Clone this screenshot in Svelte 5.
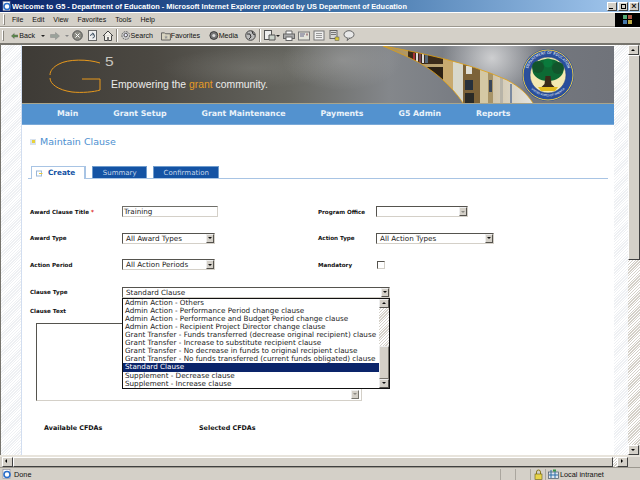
<script lang="ts">
  const menus = ["File", "Edit", "View", "Favorites", "Tools", "Help"];
  const navItems = ["Main", "Grant Setup", "Grant Maintenance", "Payments", "G5 Admin", "Reports"];
  const clauseOptions = [
    "Admin Action - Others",
    "Admin Action - Performance Period change clause",
    "Admin Action - Performance and Budget Period change clause",
    "Admin Action - Recipient Project Director change clause",
    "Grant Transfer - Funds transferred (decrease original recipient) clause",
    "Grant Transfer - Increase to substitute recipient clause",
    "Grant Transfer - No decrease in funds to original recipient clause",
    "Grant Transfer - No funds transferred (current funds obligated) clause",
    "Standard Clause",
    "Supplement - Decrease clause",
    "Supplement - Increase clause",
  ];
  let selected = "Standard Clause";
</script>

<div class="window">
  <div class="titlebar">
    <svg class="ie" width="10" height="10" viewBox="0 0 10 10">
      <rect x="1" y="0.5" width="7" height="9" fill="#fff" stroke="#889" stroke-width="0.6" />
      <circle cx="5" cy="5.5" r="3" fill="none" stroke="#2a6fc9" stroke-width="1.6" />
    </svg>
    <span class="title">Welcome to G5 - Department of Education - Microsoft Internet Explorer provided by US Department of Education</span>
    <div class="winbtns">
      <span class="winbtn"><i class="min"></i></span>
      <span class="winbtn"><i class="max"></i></span>
      <span class="winbtn close">×</span>
    </div>
  </div>

  <div class="menubar">
    <span class="grip"></span>
    {#each menus as m}<span class="menu">{m}</span>{/each}
    <span class="throbber">
      <svg width="11" height="11" viewBox="0 0 11 11">
        <rect x="1" y="1" width="4" height="4" fill="#5a7" />
        <rect x="6" y="1" width="4" height="4" fill="#a54" />
        <rect x="1" y="6" width="4" height="4" fill="#47a" />
        <rect x="6" y="6" width="4" height="4" fill="#ba4" />
      </svg>
    </span>
  </div>

  <div class="toolbar">
    <span class="grip"></span>
    <span class="tool back">
      <svg width="10" height="10" viewBox="0 0 10 10"><path d="M0.5 5 L4.5 1.5 V3.5 H9.5 V6.5 H4.5 V8.5Z" fill="#5b8a4a" stroke="#555" stroke-width="0.5" /></svg>
      Back<b class="drop"></b>
    </span>
    <span class="tool fwd">
      <svg width="10" height="10" viewBox="0 0 10 10"><path d="M9.5 5 L5.5 1.5 V3.5 H0.5 V6.5 H5.5 V8.5Z" fill="#9aa29a" stroke="#888" stroke-width="0.5" /></svg>
      <b class="drop light"></b>
    </span>
    <svg class="ico wide" width="11" height="11" viewBox="0 0 11 11"><circle cx="5.5" cy="5.5" r="4.8" fill="#8c8c84" stroke="#555" /><path d="M3.5 3.5l4 4m0-4l-4 4" stroke="#fff" /></svg>
    <svg class="ico wide" width="11" height="11" viewBox="0 0 11 11"><rect x="1.5" y="0.5" width="8" height="10" fill="#eee" stroke="#666" /><path d="M3.5 6a2 2 0 1 1 2 2M5 3l2 1-1 1.5" fill="none" stroke="#456" /></svg>
    <svg class="ico tight" width="12" height="11" viewBox="0 0 12 11"><path d="M1 6 L6 1 L11 6 M2.5 5.5V10.5H9.5V5.5" fill="#f2f0ea" stroke="#444" /><rect x="5" y="7" width="2" height="3.5" fill="#777" /></svg>
    <span class="sep"></span>
    <span class="tool search">
      <svg width="11" height="11" viewBox="0 0 11 11"><circle cx="5.5" cy="5.5" r="4.5" fill="#ccc" stroke="#555" stroke-dasharray="2 1" /><circle cx="5.5" cy="5" r="2" fill="#eef" stroke="#444" /></svg>
      Search
    </span>
    <span class="tool favs">
      <svg width="11" height="10" viewBox="0 0 11 10"><path d="M0.5 1.5H4L5 2.5H10.5V9.5H0.5Z" fill="#d8d4c0" stroke="#555" /><path d="M5.5 4l.8 1.5 1.5.2-1 1 .3 1.5-1.4-.8-1.4.8.3-1.5-1-1 1.5-.2Z" fill="#999" /></svg>
      Favorites
    </span>
    <span class="tool media">
      <svg width="11" height="11" viewBox="0 0 11 11"><circle cx="5.5" cy="5.5" r="4.5" fill="#777" stroke="#333" /><circle cx="5.5" cy="5.5" r="1.8" fill="#ddd" /></svg>
      Media
    </span>
    <svg class="ico" width="11" height="11" viewBox="0 0 11 11"><circle cx="5.5" cy="5.5" r="4.8" fill="#bbb" stroke="#444" /><path d="M2 4h3l1 3-2 2M7 1l1 3 2 1" fill="none" stroke="#333" /></svg>
    <span class="sep"></span>
    <svg width="12" height="11" viewBox="0 0 12 11"><rect x="0.5" y="0.5" width="7" height="9" fill="#eee" stroke="#555" /><path d="M5 5h6v5H5Z" fill="#cbd3cb" stroke="#555" /></svg><b class="drop edit"></b>
    <svg class="ico" width="12" height="11" viewBox="0 0 12 11"><path d="M3 4V1h6v3" fill="#fff" stroke="#666" /><rect x="0.5" y="4" width="11" height="4.5" fill="#aaa" stroke="#666" /><rect x="3" y="7" width="6" height="3.5" fill="#fff" stroke="#666" /></svg>
    <svg class="ico" width="12" height="11" viewBox="0 0 12 11"><rect x="0.5" y="2" width="11" height="8" fill="#e4e4da" stroke="#777" /><path d="M2 4h5M2 6h4" stroke="#668" /><rect x="8" y="3.5" width="2" height="2" fill="#a88" /></svg>
    <svg class="ico" width="12" height="11" viewBox="0 0 12 11"><rect x="1" y="1" width="10" height="9" fill="#eee" stroke="#777" /><path d="M3 3.5h6M3 5.5h6M3 7.5h6" stroke="#999" /></svg>
    <svg class="ico" width="12" height="11" viewBox="0 0 12 11"><rect x="2" y="0.5" width="7" height="8" fill="#d8d8d8" stroke="#666" /><path d="M3 2.5h5M3 4.5h5" stroke="#777" /><rect x="7" y="7" width="4" height="3.5" fill="#d8c83a" stroke="#555" stroke-width="0.5" /></svg>
    <svg class="ico" width="12" height="11" viewBox="0 0 12 11"><ellipse cx="6" cy="4.5" rx="5" ry="3.8" fill="#e8e8e8" stroke="#666" /><path d="M5 8l-1 2.5 3-2.5" fill="#e8e8e8" stroke="#666" /></svg>
  </div>

  <div class="viewport">
    <div class="page">
      <div class="hatch left"></div>
      <main class="content">
        <div class="banner">
          <div class="banner-photo"></div>
          <svg class="banner-art" width="592" height="57" viewBox="0 0 592 57">
            <defs>
              <linearGradient id="shelf" x1="0" x2="1" y1="0" y2="0">
                <stop offset="0" stop-color="#a88f5c" />
                <stop offset="0.5" stop-color="#c2ab7c" />
                <stop offset="1" stop-color="#e4e4e0" />
              </linearGradient>
              <clipPath id="curve">
                <path d="M361 0 C 395 6 445 16 485 34 C 498 41 505 48 511 57 H441 C 430 40 410 22 388 12 C 380 8 370 4 361 0Z" />
              </clipPath>
            </defs>
            <path d="M361 0 C 395 6 445 16 485 34 C 498 41 505 48 511 57 H441 C 430 40 410 22 388 12 C 380 8 370 4 361 0Z" fill="url(#shelf)" />
            <g clip-path="url(#curve)">
              <rect x="386" y="4" width="35" height="14" fill="#3b2b1a" />
              <rect x="391" y="7" width="2" height="10" fill="#a33" />
              <rect x="394" y="7" width="2" height="10" fill="#dcdcdc" />
              <rect x="397" y="7" width="2" height="10" fill="#745" />
              <rect x="400" y="7" width="2" height="10" fill="#dcdcdc" />
              <rect x="403" y="7" width="3" height="10" fill="#567" />
              <rect x="400" y="21" width="21" height="14" fill="#2c2114" />
              <rect x="421" y="0" width="10" height="57" fill="#c8aa70" />
              <rect x="431" y="0" width="10" height="57" fill="#d8d8cc" />
              <rect x="441" y="0" width="17" height="57" fill="#7c6238" />
              <rect x="444" y="20" width="6" height="8" fill="#e0e0d8" />
              <rect x="443" y="34" width="8" height="10" fill="#26303c" />
              <rect x="443" y="47" width="9" height="10" fill="#2a2a26" />
              <rect x="458" y="0" width="8" height="57" fill="#d4c8a4" />
              <rect x="466" y="0" width="5" height="57" fill="#a89468" />
              <rect x="467" y="34" width="3" height="12" fill="#3a4658" />
              <rect x="478" y="0" width="3" height="57" fill="#b8b4a8" />
              <rect x="488" y="38" width="2" height="19" fill="#7b8aa0" />
            </g>
            <path d="M511 57 C 505 48 498 41 485 34 C 445 16 395 6 361 0 C 370 4 380 8 388 12 C 410 22 430 40 441 57" fill="none" stroke="#e0a010" stroke-width="0.8" />
            <path d="M78 17 C 66 13 46 13 37 18 C 31 21 28 25 28 29" fill="none" stroke="#e8991c" stroke-width="1" />
            <path d="M28 32 C 28 38 36 44 50 46 C 60 47 72 46 78 44 V33 H60" fill="none" stroke="#e8991c" stroke-width="1" />
            <circle cx="526" cy="29" r="26" fill="#2a4f9c" />
            <circle cx="526" cy="29" r="25" fill="none" stroke="#e8c94a" stroke-width="1" />
            <circle cx="526" cy="29" r="18" fill="#f4e9b2" />
            <circle cx="526" cy="29" r="18" fill="none" stroke="#1b3a7c" stroke-width="0.6" />
            <ellipse cx="526" cy="24" rx="15.5" ry="11" fill="#0d6a34" />
            <circle cx="516" cy="21" r="6" fill="#12552c" />
            <circle cx="536" cy="22" r="6" fill="#12552c" />
            <circle cx="526" cy="17" r="4.5" fill="#0a7a3c" />
            <path d="M523.5 30 h5 l1 8 3 3 h-13 l3 -3Z" fill="#3a2a18" />
            <path d="M516 41 h20 l-3 4 h-14Z" fill="#e3bb20" />
            <path id="sealArc" d="M505 29 a21 21 0 0 1 42 0" fill="none" />
            <path id="sealArcLow" d="M503.5 32 a23 23 0 0 0 45 0" fill="none" />
            <text class="seal-text"><textPath href="#sealArc" startOffset="50%" text-anchor="middle">DEPARTMENT OF EDUCATION</textPath></text>
            <text class="seal-text low"><textPath href="#sealArcLow" startOffset="50%" text-anchor="middle">UNITED STATES OF AMERICA</textPath></text>
          </svg>
          <span class="g5-five">5</span>
          <span class="tagline">Empowering the <em>grant</em> community.</span>
        </div>

        <nav class="nav">
          {#each navItems as item}<span class="navitem">{item}</span>{/each}
        </nav>

        <h1 class="heading"><span class="bullet"><i></i></span>Maintain Clause</h1>

        <div class="tabs">
          <span class="tab active"><svg width="7" height="7" viewBox="0 0 7 7"><rect x="0.5" y="1" width="5" height="5" fill="#fff" stroke="#9bb8d8" /><path d="M3 3.5h3.5" stroke="#e8c83a" /></svg>Create</span>
          <span class="tab">Summary</span>
          <span class="tab">Confirmation</span>
        </div>

        <form class="form">
          <div class="row">
            <label class="lbl small">Award Clause Title <span class="req">*</span></label>
            <div class="textbox">Training</div>
            <label class="lbl small right">Program Office</label>
            <div class="select w-office disabled"><span></span><b></b></div>
          </div>
          <div class="row">
            <label class="lbl small">Award Type</label>
            <div class="select w-short"><span>All Award Types</span><b></b></div>
            <label class="lbl small right">Action Type</label>
            <div class="select w-action"><span>All Action Types</span><b></b></div>
          </div>
          <div class="row">
            <label class="lbl small">Action Period</label>
            <div class="select w-short"><span>All Action Periods</span><b></b></div>
            <label class="lbl small right">Mandatory</label>
            <div class="check"></div>
          </div>

          <div class="clause-type">
            <label class="lbl small">Clause Type</label>
            <div class="clause-field">
              <div class="select w-clause"><span>{selected}</span><b></b></div>
              <div class="popup">
                <ul>
                  {#each clauseOptions as opt}
                    <li class:sel={opt === selected}>{opt}</li>
                  {/each}
                </ul>
                <div class="popup-scroll">
                  <b class="arrow-up"></b>
                  <div class="popup-track"><div class="popup-thumb"></div></div>
                  <b class="arrow-down"></b>
                </div>
              </div>
            </div>
          </div>

          <label class="lbl small clause-text">Clause Text</label>
          <div class="textarea"><b></b></div>

          <div class="cfdas">
            <span class="lbl">Available CFDAs</span>
            <span class="lbl">Selected CFDAs</span>
          </div>
        </form>
      </main>
      <div class="hatch right"></div>
    </div>
    <div class="vscroll">
      <b class="sbtn"><i class="up"></i></b>
      <div class="vthumb"></div>
      <div class="vtrack"></div>
      <b class="sbtn"><i class="down"></i></b>
    </div>
  </div>

  <div class="hscroll">
    <b class="sbtn"><i class="lft"></i></b>
    <div class="hthumb"></div>
    <div class="htrack"></div>
    <b class="sbtn"><i class="rgt"></i></b>
    <div class="corner"></div>
  </div>

  <div class="status">
    <svg width="10" height="10" viewBox="0 0 10 10"><rect x="1" y="0.5" width="7" height="9" fill="#fff" stroke="#889" stroke-width="0.6" /><circle cx="5" cy="5.5" r="3" fill="none" stroke="#2a6fc9" stroke-width="1.6" /></svg>
    <span class="done">Done</span>
    <span class="cell"></span>
    <span class="cell"></span>
    <span class="cell lock"><svg width="9" height="11" viewBox="0 0 9 11"><path d="M2.5 5V3a2 2 0 0 1 4 0v2" fill="none" stroke="#8a7a20" /><rect x="1" y="5" width="7" height="5.5" fill="#e8d44a" stroke="#665a14" stroke-width="0.6" /></svg></span>
    <span class="zone">
      <svg width="11" height="10" viewBox="0 0 11 10"><rect x="0.5" y="3" width="10" height="6.5" fill="#dfe6ee" stroke="#456" stroke-width="0.7" /><path d="M3 1v8M7 1v8M1 6h9" stroke="#2a6fa8" /><rect x="5" y="0.5" width="3" height="2" fill="#3a9a4a" /></svg>
      Local intranet
    </span>
  </div>
</div>

<style>
  :global(body) {
    margin: 0;
    background: #fff;
  }

  .window {
    width: 640px;
    height: 480px;
    display: flex;
    flex-direction: column;
    overflow: hidden;
    background: #d4d0c8;
    font-family: "Liberation Sans", Arial, sans-serif;
    color: #111;
  }

  .titlebar {
    height: 12px;
    display: flex;
    align-items: center;
    gap: 0;
    padding: 0 1px 0 2px;
    background: linear-gradient(90deg, #0a246a 0%, #3a6ea5 50%, #a6caf0 100%);
    flex-shrink: 0;
  }

  .title {
    flex: 1;
    color: #fff;
    font-family: "Liberation Sans", sans-serif;
    font-weight: 700;
    font-size: 7.4px;
    white-space: nowrap;
    overflow: hidden;
  }

  .winbtns {
    display: flex;
    gap: 1px;
  }

  .winbtn {
    width: 10px;
    height: 9px;
    background: #d4d0c8;
    border: 1px solid;
    border-color: #fff #404040 #404040 #fff;
    box-sizing: border-box;
    position: relative;
    font-size: 9px;
    line-height: 7px;
    text-align: center;
    font-weight: 700;
  }

  .winbtn .min {
    position: absolute;
    left: 1px;
    bottom: 1px;
    width: 4px;
    height: 1px;
    background: #000;
  }

  .winbtn .max {
    position: absolute;
    left: 2px;
    top: 1px;
    width: 3px;
    height: 3px;
    border: 1px solid #000;
  }

  .menubar {
    height: 15px;
    display: flex;
    align-items: center;
    background: #d4d0c8;
    border-top: 1px solid #fff;
    border-bottom: 1px solid #9c988f;
    box-sizing: border-box;
    font-size: 7px;
    padding-left: 3px;
    flex-shrink: 0;
  }

  .grip {
    width: 2px;
    height: 11px;
    border: 1px solid;
    border-color: #fff #8a867e #8a867e #fff;
    box-sizing: border-box;
    margin-right: 7px;
    flex-shrink: 0;
  }

  .menu {
    margin-right: 9px;
  }

  .throbber {
    margin-left: auto;
    width: 25px;
    height: 14px;
    background: #000;
    display: flex;
    align-items: center;
    justify-content: center;
  }

  .toolbar {
    height: 18px;
    display: flex;
    align-items: center;
    background: #d4d0c8;
    border-top: 1px solid #fff;
    border-bottom: 2px solid #77756e;
    box-sizing: border-box;
    font-size: 7.1px;
    padding-left: 2px;
    flex-shrink: 0;
  }

  .tool {
    display: inline-flex;
    align-items: center;
    gap: 0;
    flex-shrink: 0;
  }

  .back { width: 34px; margin-right: 5px; }
  .fwd { width: 19px; margin-right: 3px; }
  .search { width: 32px; margin-right: 8px; }
  .favs { width: 39px; margin-right: 9px; }
  .media { width: 29px; margin-right: 7px; }

  .back svg { margin-right: 1px; }

  .drop {
    display: inline-block;
    width: 0;
    height: 0;
    margin-left: 6px;
    border: 2px solid transparent;
    border-top: 2px solid #222;
    border-bottom: 0;
  }

  .drop.light {
    margin-left: 5px;
    border-top-color: #888;
  }

  .drop.edit {
    margin: 0 3px 0 0;
  }

  .ico {
    margin-right: 3px;
    flex-shrink: 0;
  }

  .ico.wide {
    margin-right: 4px;
  }

  .ico.tight {
    margin-right: 2px;
  }

  .sep {
    width: 1px;
    height: 13px;
    background: #8a867e;
    border-right: 1px solid #fff;
    margin-right: 3px;
    flex-shrink: 0;
  }

  .viewport {
    flex: 1;
    display: flex;
    min-height: 0;
  }

  .page {
    flex: 1;
    display: flex;
    min-width: 0;
    overflow: hidden;
  }

  .hatch {
    background: repeating-linear-gradient(135deg, #fff 0 1px, #eef0f3 1px 2px);
    flex-shrink: 0;
  }

  .hatch.left {
    border-left: 1px solid #77756e;
    box-sizing: border-box;
    border-right: 1px solid #d2def0;
    width: 22px;
  }

  .hatch.right {
    width: 14px;
  }

  .content {
    flex: 1;
    min-width: 0;
    background: #fff;
    padding-top: 1px;
  }

  .banner {
    height: 58px;
    position: relative;
    overflow: hidden;
    background: #555;
    border-bottom: 1px solid #a9a58c;
    box-sizing: border-box;
  }

  .banner-photo {
    position: absolute;
    inset: 0;
    background:
      radial-gradient(ellipse 50px 45px at 470px 12px, rgba(235, 235, 235, 0.75), transparent),
      radial-gradient(ellipse 60px 30px at 320px 14px, rgba(190, 190, 190, 0.35), transparent),
      radial-gradient(ellipse 90px 20px at 230px 22px, rgba(150, 150, 145, 0.3), transparent),
      linear-gradient(90deg, #3e3b36 0%, #4b4842 22%, #65655f 45%, #84878b 62%, #777b82 75%, #70737a 100%);
  }

  .banner-art {
    position: absolute;
    left: 0;
    top: 0;
  }

  .seal-text {
    font-family: "DejaVu Sans", sans-serif;
    font-size: 3.6px;
    fill: #fff;
  }

  .seal-text.low {
    font-size: 2.6px;
  }

  .g5-five {
    position: absolute;
    left: 83px;
    top: 9px;
    font-size: 13px;
    line-height: 13px;
    color: #c7c5bf;
    font-family: "Liberation Sans", sans-serif;
    transform: scaleX(1.2);
    transform-origin: left;
  }

  .tagline {
    position: absolute;
    left: 89px;
    top: 33px;
    font-size: 10.4px;
    line-height: 12px;
    color: #ececea;
    font-family: "Liberation Sans", sans-serif;
    white-space: nowrap;
  }

  .tagline em {
    font-style: normal;
    color: #e59b25;
  }

  .nav {
    height: 21px;
    background: #5392cf;
    border-bottom: 1px solid #7aa9d8;
    box-sizing: border-box;
    display: flex;
    align-items: center;
    padding: 0 0 2px 35px;
    gap: 35px;
    color: #eaf2fa;
    font-family: "DejaVu Sans", sans-serif;
    font-weight: 700;
    font-size: 7.8px;
  }

  .heading {
    margin: 11px 0 0 8px;
    display: flex;
    align-items: center;
    gap: 4px;
    height: 11px;
    font-family: "DejaVu Sans", sans-serif;
    font-weight: 400;
    font-size: 9.5px;
    color: #4d8fd0;
  }

  .bullet {
    width: 6px;
    height: 6px;
    background: #d8e2ee;
    display: flex;
    align-items: center;
    justify-content: center;
  }

  .bullet i {
    width: 3px;
    height: 3px;
    background: #e8d23a;
  }

  .tabs {
    margin: 17px 6px 0 6px;
    height: 14px;
    display: flex;
    align-items: flex-end;
    border-bottom: 1px solid #a8c4e4;
    padding-left: 3px;
    gap: 6px;
    font-family: "DejaVu Sans", sans-serif;
    font-size: 7px;
  }

  .tab {
    height: 12px;
    background: #1453a4;
    color: #c6d6ea;
    border: 1px solid #6f9ccd;
    border-bottom: 0;
    padding: 0 9.5px;
    line-height: 12px;
    box-sizing: border-box;
  }

  .tab.active {
    height: 13px;
    margin: 0 0 -1px 0;
    background: #fff;
    color: #1453a4;
    font-weight: 700;
    font-size: 7.3px;
    padding: 0 9px 0 4px;
    display: inline-flex;
    align-items: center;
    gap: 5px;
    border-color: #a8c4e4;
    border-width: 1px 2px 0 1px;
  }

  .form {
    padding: 27px 0 0 8px;
    font-family: "DejaVu Sans", sans-serif;
    font-size: 7.2px;
    color: #222;
  }

  .lbl {
    font-family: "DejaVu Sans", sans-serif;
    font-weight: 700;
    font-size: 6.4px;
    color: #111;
  }

  .lbl.small {
    font-size: 5.6px;
  }

  .req {
    color: #d22;
  }

  .row {
    display: grid;
    grid-template-columns: 92px 196px 58px auto;
    align-items: center;
    height: 11px;
    margin-bottom: 15.6px;
  }

  .right {
    white-space: nowrap;
  }

  .textbox {
    width: 96px;
    height: 11px;
    box-sizing: border-box;
    background: #fff;
    border: 1px solid;
    border-color: #6e6e68 #d4d0c8 #d4d0c8 #6e6e68;
    padding-left: 1px;
    line-height: 9px;
  }

  .select {
    height: 11px;
    box-sizing: border-box;
    background: #fff;
    border: 1px solid;
    border-color: #55534e #d4d0c8 #d4d0c8 #55534e;
    display: flex;
    align-items: center;
    justify-content: space-between;
    line-height: 9px;
    padding-left: 3px;
  }

  .select b {
    width: 8px;
    height: 9px;
    background: #d4d0c8;
    border: 1px solid;
    border-color: #eee #55534e #55534e #eee;
    box-sizing: border-box;
    position: relative;
    flex-shrink: 0;
  }

  .select b::after,
  .textarea b::after {
    content: "";
    position: absolute;
    left: 1px;
    top: 2.5px;
    border: 2px solid transparent;
    border-top: 2.5px solid #111;
    border-bottom: 0;
  }

  .select.disabled b::after {
    border-top-color: #8c8a84;
  }

  .w-short {
    width: 93px;
  }

  .w-office {
    width: 92px;
  }

  .w-action {
    width: 118px;
  }

  .w-clause {
    width: 268px;
  }

  .check {
    width: 6px;
    height: 6px;
    background: #fff;
    border: 1px solid;
    border-color: #55534e #d4d0c8 #d4d0c8 #55534e;
    margin-left: 1px;
  }

  .clause-type {
    display: grid;
    grid-template-columns: 92px 1fr;
    align-items: start;
    margin-top: 16.5px;
    line-height: 11px;
  }

  .clause-field {
    position: relative;
  }

  .popup {
    position: absolute;
    z-index: 2;
    left: 0;
    top: 11px;
    width: 268px;
    height: 91px;
    box-sizing: border-box;
    background: #fff;
    border: 1px solid #111;
    display: flex;
  }

  .popup ul {
    flex: 1;
    list-style: none;
    margin: 0;
    padding: 0;
  }

  .popup li {
    height: 8.1px;
    line-height: 8.1px;
    padding-left: 2px;
    white-space: nowrap;
    color: #222;
  }

  .popup li.sel {
    background: #0a246a;
    color: #fff;
  }

  .popup-scroll {
    width: 10px;
    display: flex;
    flex-direction: column;
  }

  .popup-scroll > b {
    height: 9px;
    background: #d4d0c8;
    border: 1px solid;
    border-color: #eee #55534e #55534e #eee;
    box-sizing: border-box;
    position: relative;
  }

  .arrow-up::after,
  .arrow-down::after {
    content: "";
    position: absolute;
    left: 2px;
    top: 2.5px;
    border: 2px solid transparent;
    border-bottom: 2px solid #111;
    border-top: 0;
  }

  .arrow-down::after {
    border-top: 2px solid #111;
    border-bottom: 0;
  }

  .popup-track {
    flex: 1;
    background: repeating-linear-gradient(135deg, #fff 0 1px, #d4d0c8 1px 2px);
    display: flex;
    flex-direction: column;
    justify-content: flex-end;
  }

  .popup-thumb {
    height: 33px;
    background: #d4d0c8;
    border: 1px solid;
    border-color: #eee #77756e #77756e #eee;
    box-sizing: border-box;
  }

  .clause-text {
    display: block;
    margin-top: 9.3px;
    line-height: 8px;
  }

  .textarea {
    margin: 8px 0 0 6px;
    width: 326px;
    height: 78px;
    box-sizing: border-box;
    background: #fff;
    border: 1px solid;
    border-color: #55534e #d4d0c8 #d4d0c8 #55534e;
    position: relative;
  }

  .textarea b {
    position: absolute;
    right: 2px;
    bottom: 1px;
    width: 8px;
    height: 9px;
    background: #d4d0c8;
    border: 1px solid;
    border-color: #eee #77756e #77756e #eee;
    box-sizing: border-box;
  }

  .textarea b::after {
    border-top-color: #8c8a84;
  }

  .cfdas {
    display: grid;
    grid-template-columns: 155px 1fr;
    padding-left: 14px;
    margin-top: 23px;
  }

  .vscroll {
    width: 12px;
    display: flex;
    flex-direction: column;
    background: #d4d0c8;
    flex-shrink: 0;
  }

  .sbtn {
    display: block;
    height: 10px;
    width: 11px;
    background: #d4d0c8;
    border: 1px solid;
    border-color: #fff #404040 #404040 #fff;
    box-sizing: border-box;
    position: relative;
    flex-shrink: 0;
  }

  .sbtn i {
    position: absolute;
    left: 2px;
    top: 3px;
    border: 2.5px solid transparent;
  }

  .sbtn i.up {
    border-bottom-color: #000;
    border-top: 0;
  }

  .sbtn i.down {
    border-top-color: #000;
    border-bottom: 0;
  }

  .sbtn i.lft {
    left: 2px;
    top: 1px;
    border-right-color: #000;
    border-left: 0;
  }

  .sbtn i.rgt {
    left: 3px;
    top: 1px;
    border-left-color: #000;
    border-right: 0;
  }

  .vthumb {
    height: 205px;
    background: #d4d0c8;
    border: 1px solid;
    border-color: #fff #404040 #404040 #fff;
    box-sizing: border-box;
  }

  .vtrack {
    flex: 1;
    background: repeating-linear-gradient(135deg, #fff 0 1px, #d4d0c8 1px 2px);
  }

  .hscroll {
    height: 12px;
    display: flex;
    background: #d4d0c8;
    border-top: 2px solid #e8e4dc;
    padding-left: 2px;
    box-sizing: border-box;
    flex-shrink: 0;
  }

  .hthumb {
    flex: 1;
    background: #d4d0c8;
    border: 1px solid;
    border-color: #fff #404040 #404040 #fff;
    box-sizing: border-box;
  }

  .htrack {
    width: 4px;
    background: repeating-linear-gradient(135deg, #fff 0 1px, #d4d0c8 1px 2px);
  }

  .corner {
    width: 12px;
  }

  .status {
    height: 13px;
    display: flex;
    align-items: center;
    background: #d4d0c8;
    border-top: 1px solid #9c988f;
    box-sizing: border-box;
    font-size: 7.3px;
    padding-left: 2px;
    flex-shrink: 0;
  }

  .done {
    margin-left: 2px;
    flex: 1;
  }

  .cell {
    width: 15px;
    height: 11px;
    border-left: 1px solid #aaa69e;
    box-sizing: border-box;
  }

  .cell.lock {
    display: flex;
    align-items: center;
    justify-content: center;
  }

  .zone {
    width: 95px;
    height: 11px;
    border-left: 1px solid #aaa69e;
    display: flex;
    align-items: center;
    gap: 1px;
    padding-left: 2px;
    box-sizing: border-box;
  }
</style>
